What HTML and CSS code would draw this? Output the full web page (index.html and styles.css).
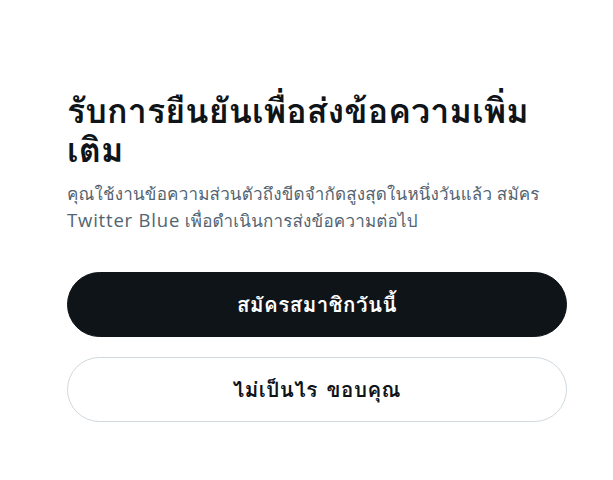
FILE: index.html
```html
<!DOCTYPE html>
<html lang="th">
<head>
<meta charset="utf-8">
<link rel="stylesheet" href="styles.css">
</head>
<body>
<div class="sheet">
  <h1 class="title">รับการยืนยันเพื่อส่งข้อความเพิ่มเติม</h1>
  <p class="subtitle">คุณใช้งานข้อความส่วนตัวถึงขีดจำกัดสูงสุดในหนึ่งวันแล้ว สมัคร <span class="brand">Twitter Blue</span> เพื่อดำเนินการส่งข้อความต่อไป</p>
  <div class="actions">
    <button class="btn btn-primary">สมัครสมาชิกวันนี้</button>
    <button class="btn btn-secondary">ไม่เป็นไร ขอบคุณ</button>
  </div>
</div>
</body>
</html>
```
FILE: styles.css
```css
html, body {
  margin: 0;
  padding: 0;
  background: #ffffff;
}
body {
  font-family: "Open Sans", "Loma", "Noto Sans Thai", sans-serif;
  color: #0f1419;
}
.sheet {
  width: 500px;
  margin-left: 67px;
  padding-top: 91px;
}
.title {
  margin: 0;
  font-size: 34px;
  line-height: 39px;
  font-weight: 700;
  letter-spacing: 0.1px;
  color: #0f1419;
}
.subtitle {
  margin: 12px 0 0;
  font-size: 17px;
  line-height: 26px;
  letter-spacing: 0.2px;
  color: #536471;
}
.brand {
  font-size: 18.5px;
  letter-spacing: 0.8px;
}
.actions {
  display: flex;
  flex-direction: column;
  gap: 20px;
  margin-top: 38px;
}
.btn {
  height: 65px;
  border-radius: 9999px;
  font-family: inherit;
  font-size: 20.5px;
  font-weight: 700;
  letter-spacing: 0.5px;
  word-spacing: 3px;
  cursor: pointer;
}
.btn-primary {
  background: #0f1419;
  color: #ffffff;
  border: 1px solid #0f1419;
}
.btn-secondary {
  background: #ffffff;
  color: #0f1419;
  border: 1px solid #cfd9de;
}
```
